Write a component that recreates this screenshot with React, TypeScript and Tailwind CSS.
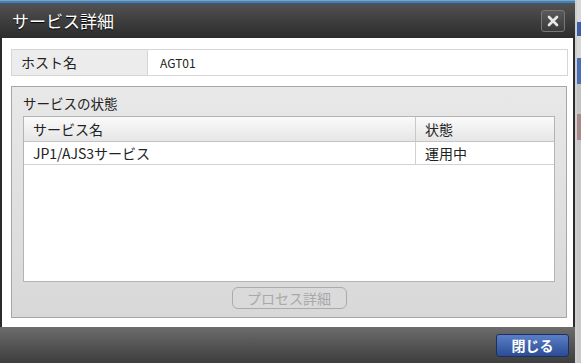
import React from 'react'

const jp = "font-['Meiryo','Noto_Sans_CJK_JP',sans-serif]"

export default function App() {
  return (
    <div className={`flex h-[363px] w-[581px] overflow-hidden bg-[#cfcfcf] ${jp}`}>
      {/* Dialog */}
      <div className="flex w-[575px] shrink-0 flex-col bg-[#2b2b2b]">
        <div className="h-[1px] bg-[#9a9a9a]" />
        <div className="h-[2px] bg-[#2b86d6]" />

        {/* Title bar */}
        <div className="flex h-[35px] items-center justify-between bg-gradient-to-b from-[#525252] to-[#2c2c2c] pl-[12px] pr-[10px]">
          <span className="text-[17px] leading-none text-white [text-shadow:0_1px_1px_#000]">サービス詳細</span>
          <button className="flex h-[22px] w-[24px] items-center justify-center rounded-[3px] border border-[#777] bg-gradient-to-b from-[#5a5a5a] to-[#3a3a3a]">
            <svg width="12" height="12" viewBox="0 0 12 12">
              <path d="M2 2L10 10M10 2L2 10" stroke="#e8e8e8" strokeWidth="2.6" strokeLinecap="round" />
            </svg>
          </button>
        </div>

        {/* Content */}
        <div className="mx-[2px] flex h-[289px] flex-col bg-white px-[9px] pt-[11px]">
          {/* Host row */}
          <div className="flex h-[27px] w-[557px] border border-[#d6d6d6]">
            <div className="flex w-[136px] items-center border-r border-[#d6d6d6] bg-[#ececec] pl-[9px] text-[14px] text-[#222]">
              ホスト名
            </div>
            <div className="flex flex-1 items-center pl-[12px] text-[12px] text-[#222]">AGT01</div>
          </div>

          {/* Group box */}
          <div className="mt-[10px] flex h-[232px] w-[556px] flex-col border border-[#a6a6a6] bg-gradient-to-b from-[#e8e8e8] to-[#d8d8d8] px-[11px]">
            <div className="pt-[6px] text-[13.5px] leading-[20px] text-[#222]">サービスの状態</div>

            {/* Table */}
            <div className="mt-[3px] flex h-[166px] w-[532px] flex-col border border-[#b4b4b4] bg-white">
              <div className="flex h-[25px] border-b border-[#c4c4c4] bg-gradient-to-b from-[#fafafa] to-[#e6e6e6] text-[14px] text-[#222]">
                <div className="flex w-[392px] items-center border-r border-[#c8c8c8] pl-[9px]">サービス名</div>
                <div className="flex flex-1 items-center pl-[9px]">状態</div>
              </div>
              <div className="flex h-[23px] border-b border-[#d2d2d2] text-[14px] text-[#222]">
                <div className="flex w-[392px] items-center border-r border-[#d0d0d0] pl-[9px]">JP1/AJS3サービス</div>
                <div className="flex flex-1 items-center pl-[9px]">運用中</div>
              </div>
            </div>

            <div className="mt-[5px] flex justify-center">
              <button className="flex h-[22px] w-[115px] items-center justify-center rounded-[6px] border border-[#ababab] bg-[#dadada] text-[14px] text-[#a9a9a9]">
                プロセス詳細
              </button>
            </div>
          </div>
        </div>

        {/* Footer */}
        <div className="flex flex-1 items-center justify-end bg-gradient-to-b from-[#6c6c6c] to-[#3e3e3e] pr-[6px]">
          <button className="flex h-[23px] w-[73px] items-center justify-center rounded-[3px] border border-[#1c2f63] bg-gradient-to-b from-[#5a7fc8] to-[#2c4c94] text-[14px] font-bold text-white">
            閉じる
          </button>
        </div>
      </div>

      {/* Underlying page edge */}
      <div className="flex flex-1 flex-col pl-[2px]">
        <div className="h-[22px] bg-[#d8d8d8]" />
        <div className="h-[14px] bg-[#3b5da8]" />
        <div className="h-[22px] bg-[#d8d8d8]" />
        <div className="h-[26px] bg-[#4a6fb8]" />
        <div className="h-[30px] bg-[#c4c4c4]" />
        <div className="h-[26px] bg-[#a88a8a]" />
        <div className="flex-1 bg-[#c8c8c8]" />
      </div>
    </div>
  )
}
